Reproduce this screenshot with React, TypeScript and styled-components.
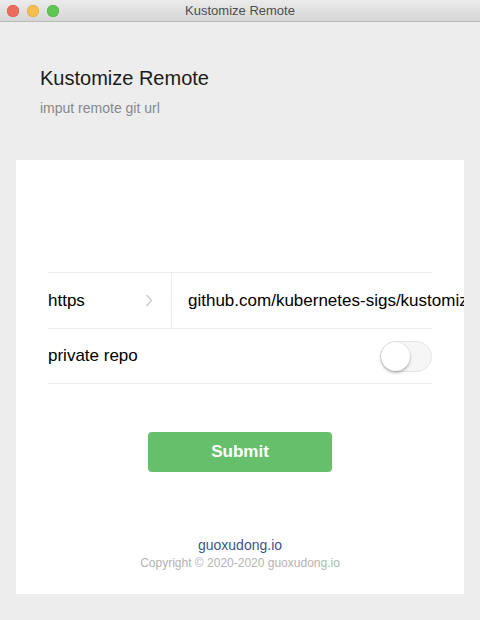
import React, { useState } from 'react';
import styled, { createGlobalStyle } from 'styled-components';

const GlobalStyle = createGlobalStyle`
  html, body {
    margin: 0;
    padding: 0;
    background: #ededed;
  }
  body {
    font-family: "Liberation Sans", Arial, sans-serif;
    -webkit-font-smoothing: antialiased;
  }
`

const Window = styled.div`
  width: 480px;
  height: 620px;
  display: flex;
  flex-direction: column;
  background: #ededed;
  overflow: hidden;
`

const TitleBar = styled.div`
  height: 21px;
  border-bottom: 1px solid #b9b9b9;
  background: linear-gradient(#ebebeb, #d6d6d6);
  display: flex;
  align-items: center;
  justify-content: center;
  position: relative;
  font-size: 13px;
  color: #4d4d4d;
`

const Lights = styled.div`
  position: absolute;
  left: 7px;
  top: 5px;
  display: flex;
  gap: 8px;
`

const Light = styled.span<{ color: string; edge: string }>`
  width: 12px;
  height: 12px;
  border-radius: 50%;
  background: ${({ color }) => color};
  box-shadow: inset 0 0 0 0.5px ${({ edge }) => edge};
`

const Header = styled.div`
  padding: 42px 40px 0;
  height: 96px;
`

const Title = styled.div`
  font-size: 20px;
  line-height: 28px;
  color: #1a1a1a;
`

const Subtitle = styled.div`
  margin-top: 6px;
  font-size: 14px;
  line-height: 20px;
  color: #888;
`

const Card = styled.div`
  margin: 0 16px;
  height: 434px;
  background: #fff;
  padding: 112px 32px 0;
  box-sizing: border-box;
  overflow: hidden;
`

const List = styled.div`
  border-top: 1px solid #ececec;
`

const Row = styled.div<{ h: number }>`
  height: ${({ h }) => h}px;
  border-bottom: 1px solid #ececec;
  display: flex;
  align-items: center;
  font-size: 17px;
  color: #000;
`

const PickerCell = styled.div`
  width: 124px;
  height: 100%;
  display: flex;
  align-items: center;
  justify-content: space-between;
  padding-right: 18px;
  box-sizing: border-box;
  border-right: 1px solid #ececec;
`

const Value = styled.div`
  flex: 1;
  margin-right: -32px;
  padding-left: 16px;
  white-space: nowrap;
  overflow: hidden;
`

const Label = styled.div`
  flex: 1;
`

const Track = styled.button<{ on: boolean }>`
  width: 52px;
  height: 31px;
  border-radius: 16px;
  border: 1px solid ${({ on }) => (on ? '#4dd865' : '#e5e5e5')};
  background: ${({ on }) => (on ? '#4dd865' : '#f6f6f6')};
  padding: 0;
  display: flex;
  align-items: center;
  justify-content: ${({ on }) => (on ? 'flex-end' : 'flex-start')};
  cursor: pointer;
  box-sizing: border-box;
`

const Knob = styled.span`
  width: 29px;
  height: 29px;
  border-radius: 50%;
  background: #fff;
  box-shadow: 0 2px 3px rgba(0, 0, 0, 0.25), 0 0 0 0.5px rgba(0, 0, 0, 0.08);
`

const SubmitButton = styled.button`
  display: block;
  margin: 48px auto 0;
  width: 184px;
  height: 40px;
  border: none;
  border-radius: 4px;
  background: #66bf6a;
  color: #fff;
  font-family: inherit;
  font-size: 17px;
  font-weight: bold;
  cursor: pointer;
`

const Footer = styled.div`
  margin-top: 63px;
  text-align: center;
`

const Site = styled.div`
  font-size: 14px;
  line-height: 20px;
  color: #3f5489;
`

const Copyright = styled.div`
  font-size: 12px;
  line-height: 16px;
  color: #b3b3b3;
`

const Chevron = () => (
  <svg width="8" height="13" viewBox="0 0 8 13">
    <polyline points="1.5,1 6.5,6.5 1.5,12" fill="none" stroke="#c7c7cc" strokeWidth="1.3" />
  </svg>
)

const App: React.FC = () => {
  const [priv, setPriv] = useState(false);

  return (
    <>
      <GlobalStyle />
      <Window>
        <TitleBar>
          <Lights>
            <Light color="#ec6a5e" edge="#d0524a" />
            <Light color="#f4bf4f" edge="#d6a23c" />
            <Light color="#61c554" edge="#4fa83f" />
          </Lights>
          Kustomize Remote
        </TitleBar>
        <Header>
          <Title>Kustomize Remote</Title>
          <Subtitle>imput remote git url</Subtitle>
        </Header>
        <Card>
          <List>
            <Row h={55}>
              <PickerCell>
                https
                <Chevron />
              </PickerCell>
              <Value>github.com/kubernetes-sigs/kustomize</Value>
            </Row>
            <Row h={54}>
              <Label>private repo</Label>
              <Track on={priv} onClick={() => setPriv(!priv)}>
                <Knob />
              </Track>
            </Row>
          </List>
          <SubmitButton>Submit</SubmitButton>
          <Footer>
            <Site>guoxudong.io</Site>
            <Copyright>Copyright © 2020-2020 guoxudong.io</Copyright>
          </Footer>
        </Card>
      </Window>
    </>
  );
};

export default App;
